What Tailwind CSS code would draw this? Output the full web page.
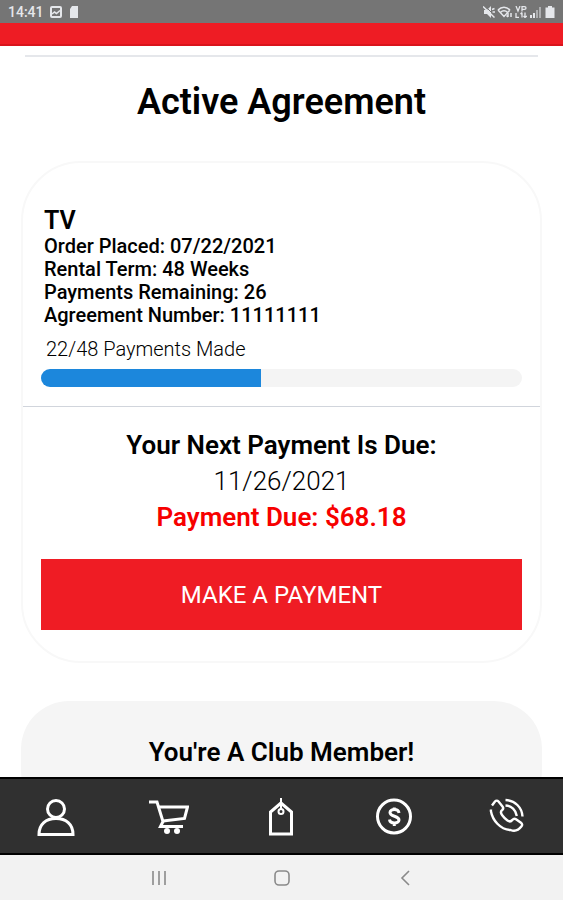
<!DOCTYPE html>
<html lang="en">

<head>
    <meta charset="utf-8">
    <meta name="viewport" content="width=device-width, initial-scale=1">
    <title>Active Agreement</title>
    <script src="https://cdn.jsdelivr.net/npm/@tailwindcss/browser@4"></script>
</head>

<body class="bg-white text-black font-[Roboto,sans-serif]">
    <div class="flex flex-col h-screen">

        <!-- Status bar -->
        <div class="flex justify-between items-center h-[23px] shrink-0 px-2 bg-[#757575] text-gray-200">
            <div class="flex items-center gap-1.5">
                <span class="text-sm font-medium">14:41</span>
                <svg class="w-3 h-3" viewBox="0 0 12 12" fill="none" stroke="currentColor" stroke-width="2">
                    <rect x="1" y="1" width="10" height="10" rx="1" />
                    <path d="M2 8l2.500-2 2 1.500L10 4.500" stroke-width="1.600" />
                </svg>
                <svg class="w-3 h-3" viewBox="0 0 12 12" fill="currentColor">
                    <path d="M4 0h6v12H2V3z" />
                </svg>
            </div>
            <div class="flex items-center gap-0.5">
                <svg class="w-3 h-3" viewBox="0 0 12 12" fill="currentColor">
                    <path d="M1 4h3l4-4v12L4 8H1z" />
                    <path d="M2 0l10 10" stroke="#757575" stroke-width="1" />
                    <path d="M0 .5l11.500 11M9 3.500l2.500-1M9.500 6H12" stroke="currentColor" stroke-width="1.500" />
                </svg>
                <svg class="w-4 h-3" viewBox="0 0 16 12" fill="none" stroke="currentColor" stroke-width="1.500">
                    <path d="M1 4c3.500-3.800 8.500-3.800 12 0M3.500 6.500c2-2.200 5-2.200 7 0M1 4l6 6.500L13 4" />
                    <path d="M11 7v4m-1.500-1.500L11 11M14 11V7" />
                </svg>
                <svg class="w-3 h-3" viewBox="0 0 12 12" fill="none" stroke="currentColor" stroke-width="1.300">
                    <path d="M1 0l2 5 2-5M7 5.500V.7h2.500c2 0 2 2.600 0 2.600H7M1 7v4.500h3M7 6.500v5M10 11.500v-5M5.500 8L7 6.500M8.500 10l1.500 1.500L12 10" />
                </svg>
                <svg class="w-3 h-3" viewBox="0 0 12 12" fill="currentColor">
                    <path d="M1 9h2v3H1zM4 7h2v5H4z" />
                    <path d="M7 4h2v8H7zM10 1h2v11h-2z" opacity=".5" />
                </svg>
                <svg class="w-3 h-3" viewBox="0 0 12 12" fill="currentColor">
                    <path d="M5 0h4v1.500h2.500V12h-9V1.500H5z" />
                </svg>
            </div>
        </div>

        <!-- App header strip -->
        <header class="h-[23px] shrink-0 bg-[#ee1c24] border-b-2 border-[#d9141c]"></header>

        <!-- Page content -->
        <main class="flex-1 min-h-0 overflow-hidden px-[21px] pt-[9px]">
            <hr class="border-gray-200 border-t-2 mx-1">
            <h1 class="text-[36px] leading-[44px] font-semibold text-center mt-[23px]">Active Agreement</h1>

            <!-- Agreement card -->
            <section class="mt-[37px] rounded-[60px] border-2 border-[#f8f8f8] pb-[31px]">
                <div class="px-[18px] pt-11">
                    <h2 class="text-[25px] leading-7 font-semibold px-[3px]">TV</h2>
                    <ul class="text-[20px] leading-[23px] font-medium px-[3px]">
                        <li>Order Placed: 07/22/2021</li>
                        <li>Rental Term: 48 Weeks</li>
                        <li>Payments Remaining: 26</li>
                        <li>Agreement Number: 11111111</li>
                    </ul>
                    <p class="text-[20px] leading-6 font-light px-[5px] mt-[10px]">22/48 Payments Made</p>
                    <div role="progressbar" aria-label="Payments made" aria-valuemin="0" aria-valuemax="48" aria-valuenow="22"
                        class="h-[18px] mt-2 rounded-full bg-[#f4f4f4] overflow-hidden">
                        <div class="h-full bg-[#1c87dc]" style="width: 45.8%"></div>
                    </div>
                </div>
                <hr class="border-gray-300 mt-[19px]">
                <div class="px-[18px] pt-5 text-center text-[26px] leading-9">
                    <h3 class="font-semibold">Your Next Payment Is Due:</h3>
                    <p class="font-light">11/26/2021</p>
                    <p class="font-semibold text-[#f70000]">Payment Due: $68.18</p>
                    <button type="button"
                        class="block w-full h-[71px] mt-6 bg-[#ef1c24] text-white text-[24px] cursor-pointer">MAKE A PAYMENT</button>
                </div>
            </section>

            <!-- Club card -->
            <section class="mt-[38px] rounded-[48px] bg-[#f5f5f5] pt-[33px] pb-12 text-center">
                <h2 class="text-[26px] leading-9 font-semibold">You're A Club Member!</h2>
            </section>
        </main>

        <!-- Tab bar -->
        <nav class="grid grid-cols-5 h-[78px] shrink-0 bg-[#303030] border-y-2 border-black text-white">
            <a href="#" aria-label="Account" class="flex items-center justify-center pt-1">
                <svg class="w-10 h-10" viewBox="0 0 40 40" fill="none" stroke="currentColor" stroke-width="3">
                    <circle cx="20" cy="11" r="8.500" />
                    <path d="M3 36.500C3 26 10 20.500 20 20.500S37 26 37 36.500z" />
                </svg>
            </a>
            <a href="#" aria-label="Cart" class="flex items-center justify-center pt-1">
                <svg class="w-10 h-10" viewBox="0 0 40 40" fill="none" stroke="currentColor" stroke-width="3">
                    <path d="M0 4h8l6 19.500-2.500 5H34" />
                    <path d="M9 9h29.500l-3 11.500L14 23" />
                    <circle cx="18" cy="33" r="3" fill="currentColor" stroke="none" />
                    <circle cx="28" cy="33" r="3" fill="currentColor" stroke="none" />
                </svg>
            </a>
            <a href="#" aria-label="Deals" class="flex items-center justify-center pt-1">
                <svg class="w-10 h-10" viewBox="0 0 40 40" fill="none" stroke="currentColor" stroke-width="3">
                    <path d="M20 5L9.500 14v22h21V14z" />
                    <path d="M20 0v11" stroke-width="2" />
                    <circle cx="20" cy="13.500" r="2.500" stroke-width="2" />
                </svg>
            </a>
            <a href="#" aria-label="Payments" class="flex items-center justify-center">
                <svg class="w-10 h-10" viewBox="0 0 40 40" fill="none" stroke="currentColor" stroke-width="3">
                    <circle cx="20" cy="20.500" r="16.500" />
                    <path d="M25 17c-.5-4.500-9-4.500-9-.5 0 4.500 9 3 9 7.500 0 4-9 4-9.500-.5M20.300 11.500V14M20.300 26v4" />
                </svg>
            </a>
            <a href="#" aria-label="Call" class="flex items-center justify-center">
                <svg class="w-10 h-10" viewBox="0 0 40 40" fill="none" stroke="currentColor" stroke-width="2.400" stroke-linejoin="round">
                    <path d="M5 9.500l3-4c1-1.200 2.500-1.200 3.500 0l4 5c1 1.200.8 2.500-.3 3.500-2 1.500-1.700 3 0 5.300 1.600 2.200 3 3.700 5.300 5.200 2 1.400 3.500 1.300 5-.8 1-1.200 2.200-1.400 3.500-.5l5 3.600c1.300 1 1.500 2.300.5 3.500-3 4-6.500 5.500-11 3.700C13 33.500 5.500 24 4 15.500c-.2-1 0-1.500 0-2" />
                    <path d="M18.500 9.500c6 .2 10.500 4.500 11.300 10.500" />
                    <path d="M18.500 4c9.500.3 16.500 7.500 17 16.500" />
                </svg>
            </a>
        </nav>

        <!-- System navigation -->
        <div class="flex justify-center items-center gap-[105px] h-[45px] shrink-0 bg-[#f2f2f2] text-[#8a8a8a]">
            <button type="button" aria-label="Recent apps" class="cursor-pointer">
                <svg class="w-[18px] h-[18px]" viewBox="0 0 18 18" fill="none" stroke="currentColor" stroke-width="1.600">
                    <path d="M3 2v14M9 2v14M15 2v14" />
                </svg>
            </button>
            <button type="button" aria-label="Home" class="cursor-pointer">
                <svg class="w-[18px] h-[18px]" viewBox="0 0 18 18" fill="none" stroke="currentColor" stroke-width="1.600">
                    <rect x="2" y="2" width="14" height="14" rx="4" />
                </svg>
            </button>
            <button type="button" aria-label="Back" class="cursor-pointer">
                <svg class="w-[18px] h-[18px]" viewBox="0 0 18 18" fill="none" stroke="currentColor" stroke-width="1.600">
                    <path d="M13 2L6 9l7 7" />
                </svg>
            </button>
        </div>
    </div>
</body>

</html>
